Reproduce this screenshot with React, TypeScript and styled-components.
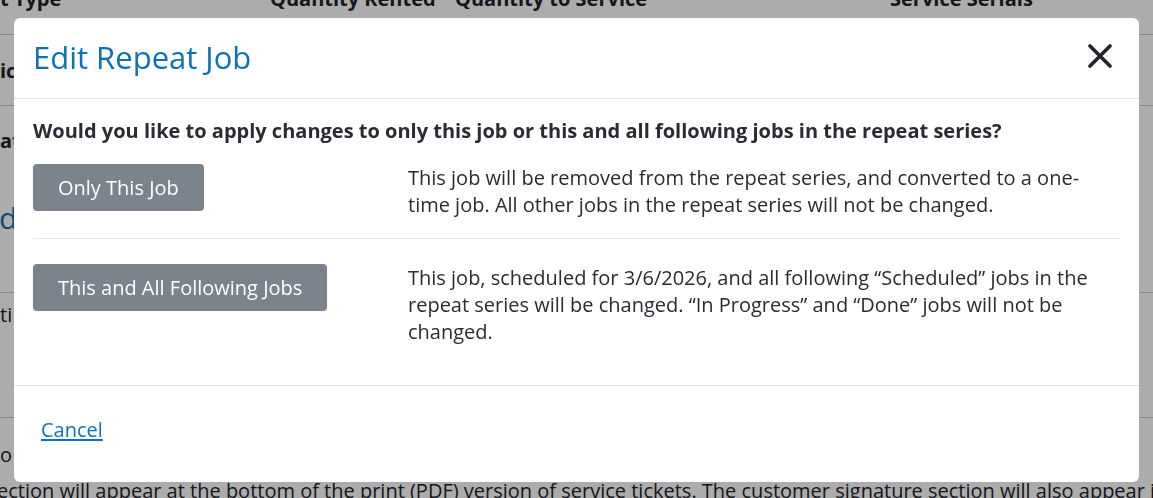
import React from "react";
import styled, { createGlobalStyle } from "styled-components";

const Global = createGlobalStyle`
  html, body { margin: 0; padding: 0; }
  body {
    font-family: "Open Sans", "Noto Sans", sans-serif;
    background: #ffffff;
    color: #2a2b33;
    overflow: hidden;
  }
`;

const Page = styled.div`
  width: 1153px;
  height: 498px;
  overflow: hidden;
  position: relative;
  background: #ffffff;
`;

const PageInner = styled.div`
  margin-top: -15px;
  width: 1400px;
  font-size: 20px;
  line-height: 27px;
  color: #22232b;
`;

const TableRow = styled.div<{ $h: number; $head?: boolean }>`
  height: ${(p) => p.$h}px;
  box-sizing: border-box;
  border-bottom: 1px solid #c9c9c9;
  display: grid;
  grid-template-columns: 270px 185px 435px 1fr;
  align-items: ${(p) => (p.$head ? "start" : "center")};
  font-weight: 700;
`;

const Cell = styled.div`
  white-space: nowrap;
`;

const BgBlock = styled.div<{ $h: number; $pt: number }>`
  height: ${(p) => p.$h}px;
  box-sizing: border-box;
  padding-top: ${(p) => p.$pt}px;
  border-bottom: 1px solid #c9c9c9;
`;

const BgBold = styled.div`
  font-weight: 700;
  white-space: nowrap;
`;

const BgHeading = styled.div`
  margin-top: 46px;
  margin-left: -1px;
  font-size: 30px;
  line-height: 36px;
  color: #0b72b5;
  white-space: nowrap;
`;

const BgText = styled.div<{ $mt?: number; $ml?: number }>`
  white-space: nowrap;
  margin-top: ${(p) => p.$mt ?? 0}px;
  margin-left: ${(p) => p.$ml ?? 0}px;
`;

const Overlay = styled.div`
  position: fixed;
  inset: 0;
  background: rgba(0, 0, 0, 0.325);
`;

const Modal = styled.div`
  position: fixed;
  left: 14px;
  top: 18px;
  width: 1125px;
  height: 464px;
  background: #ffffff;
  border-radius: 6px;
  display: flex;
  flex-direction: column;
  overflow: hidden;
`;

const Header = styled.div`
  height: 80px;
  flex: none;
  display: flex;
  align-items: center;
  justify-content: space-between;
  padding: 0 27px 0 19px;
  border-bottom: 1px solid #e2e2e2;
`;

const Title = styled.h2`
  margin: 0;
  font-size: 31px;
  font-weight: 400;
  color: #0b72b5;
  line-height: 1.2;
`;

const CloseButton = styled.button`
  border: none;
  background: none;
  padding: 0;
  width: 24px;
  height: 24px;
  display: flex;
  align-items: center;
  justify-content: center;
  cursor: pointer;
  margin-top: -5px;
`;

const Body = styled.div`
  flex: 1;
  padding: 18px 19px 0 19px;
`;

const Question = styled.p`
  margin: 0 0 20px 0;
  font-size: 20px;
  line-height: 27px;
  font-weight: 700;
  color: #2a2b33;
`;

const OptionRow = styled.div<{ $last?: boolean }>`
  display: grid;
  grid-template-columns: 375px 1fr;
  align-items: start;
  padding: ${(p) => (p.$last ? "25px 0 0 0" : "0 0 20px 0")};
  border-bottom: ${(p) => (p.$last ? "none" : "1px solid #e8e8e8")};
`;

const OptionButton = styled.button`
  justify-self: start;
  height: 47px;
  padding: 0 25px 1px;
  border: none;
  border-radius: 4px;
  background: #7b838c;
  color: #ffffff;
  font-family: "Open Sans", "Noto Sans", sans-serif;
  font-size: 20px;
  cursor: pointer;
`;

const OptionText = styled.p`
  margin: 0;
  font-size: 20px;
  line-height: 27px;
  color: #2a2b33;
`;

const Footer = styled.div`
  height: 97px;
  flex: none;
  border-top: 1px solid #e2e2e2;
  padding: 30px 19px 0 19px;
  box-sizing: border-box;
`;

const CancelLink = styled.a`
  display: inline-block;
  padding: 0 8px;
  font-size: 20px;
  line-height: 27px;
  color: #0e72b8;
  text-decoration: underline;
  text-underline-offset: 2px;
  cursor: pointer;
`;

const CloseIcon = () => (
  <svg width="24" height="24" viewBox="0 0 24 24" fill="none">
    <path
      d="M2 2 L22 22 M22 2 L2 22"
      stroke="#23242f"
      strokeWidth="3.6"
      strokeLinecap="round"
    />
  </svg>
);

export default function App() {
  return (
    <>
      <Global />
      <Page>
        <PageInner>
          <TableRow $h={50} $head>
            <Cell>t Type</Cell>
            <Cell>Quantity Rented</Cell>
            <Cell>Quantity to Service</Cell>
            <Cell>Service Serials</Cell>
          </TableRow>
          <TableRow $h={71}>
            <Cell>ic</Cell>
            <Cell />
            <Cell />
            <Cell />
          </TableRow>
          <BgBlock $h={187} $pt={21}>
            <BgBold>at</BgBold>
            <BgHeading>d</BgHeading>
          </BgBlock>
          <BgBlock $h={125} $pt={8}>
            <BgText>ti</BgText>
          </BgBlock>
          <BgText $mt={23}>o</BgText>
          <BgText $mt={9} $ml={-3}>
            {"ection will appear at the bottom of the print (PDF) version of service tickets. The customer signature section will also appear in the app."}
          </BgText>
        </PageInner>
        <Overlay />
        <Modal role="dialog" aria-labelledby="edit-repeat-title">
          <Header>
            <Title id="edit-repeat-title">Edit Repeat Job</Title>
            <CloseButton aria-label="Close">
              <CloseIcon />
            </CloseButton>
          </Header>
          <Body>
            <Question>
              Would you like to apply changes to only this job or this and all following jobs in the repeat series?
            </Question>
            <OptionRow>
              <OptionButton>Only This Job</OptionButton>
              <OptionText>
                This job will be removed from the repeat series, and converted to a one-time job. All other jobs in the repeat series will not be changed.
              </OptionText>
            </OptionRow>
            <OptionRow $last>
              <OptionButton>This and All Following Jobs</OptionButton>
              <OptionText>
                This job, scheduled for 3/6/2026, and all following “Scheduled” jobs in the repeat series will be changed. “In Progress” and “Done” jobs will not be changed.
              </OptionText>
            </OptionRow>
          </Body>
          <Footer>
            <CancelLink>Cancel</CancelLink>
          </Footer>
        </Modal>
      </Page>
    </>
  );
}
